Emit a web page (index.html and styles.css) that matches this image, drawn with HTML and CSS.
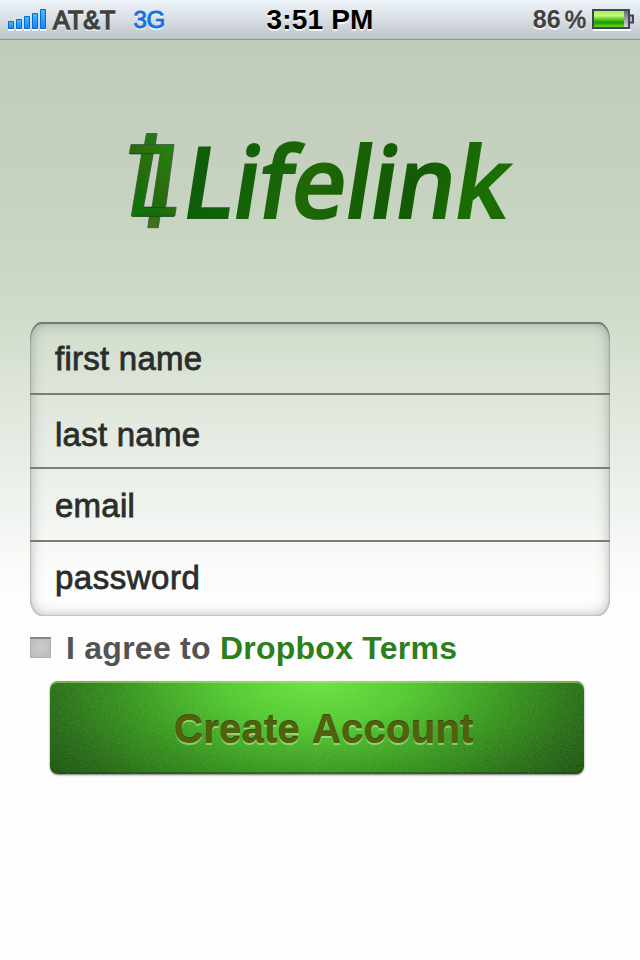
FILE: index.html
```html
<!DOCTYPE html>
<html lang="en">
<head>
<meta charset="utf-8">
<title>Lifelink</title>
<link rel="stylesheet" href="styles.css">
</head>
<body>
<header class="status">
  <div class="carrier">
    <svg class="signal" width="40" height="22" viewBox="0 0 40 22">
      <defs><linearGradient id="sig" x1="0" y1="0" x2="0" y2="1"><stop offset="0" stop-color="#45bdff"/><stop offset="1" stop-color="#1687f2"/></linearGradient></defs>
      <g fill="#fff"><path d="M0 20h6v2H0zM8 20h6v2H8zM16 20h6v2h-6zM24 20h6v2h-6zM32 20h6v2h-6z"/></g>
      <g fill="url(#sig)" stroke="#0868d8"><path d="M.5 12.5h5v7h-5z"/><path d="M8.500 10.500h5v9h-5z"/><path d="M16.500 7.500h5v12h-5z"/><path d="M24.500 4.500h5v15h-5z"/><path d="M32.500.5h5v19h-5z"/></g>
    </svg>
    <span class="operator">AT&amp;T</span>
    <span class="network">3G</span>
  </div>
  <span class="time">3:51 PM</span>
  <div class="power">
    <span class="percent">86<span class="sign">%</span></span>
    <svg class="battery" width="43" height="22" viewBox="0 0 43 22">
      <defs><linearGradient id="bat" x1="0" y1="0" x2="0" y2="1"><stop offset="0" stop-color="#a5f34b"/><stop offset=".3" stop-color="#c3f686"/><stop offset=".5" stop-color="#62cf20"/><stop offset=".72" stop-color="#249600"/><stop offset="1" stop-color="#63e01b"/></linearGradient>
      <linearGradient id="cell" x1="0" y1="0" x2="0" y2="1"><stop offset="0" stop-color="#666"/><stop offset="1" stop-color="#ddd"/></linearGradient></defs>
      <path d="M1 21h38" stroke="#fff" stroke-width="2"/>
      <path d="M1 1h36v18H1z" fill="url(#cell)" stroke="#3c465b" stroke-width="2"/>
      <path d="M2 2h30v16H2z" fill="url(#bat)"/>
      <path d="M38 6.500h3v7h-3" fill="#b4bac4" stroke="#3c465b" stroke-width="2"/>
    </svg>
  </div>
</header>
<main class="page">
  <h1 class="logo">
    <svg class="mark" width="52" height="98" viewBox="127 132 52 98">
      <defs><linearGradient id="mk" x1="0" y1="1" x2="1" y2="0"><stop offset="0" stop-color="#087808"/><stop offset=".3" stop-color="#176e0c"/><stop offset=".5" stop-color="#2b6c0c"/><stop offset="1" stop-color="#238412"/></linearGradient>
      <linearGradient id="post" x1="0" y1="0" x2="0" y2="1"><stop offset="0" stop-color="#24761a"/><stop offset="1" stop-color="#3a7315"/></linearGradient></defs>
      <g stroke="#38503a" stroke-width=".8">
        <path fill="url(#post)" d="M146.500 133.500H157L155.300 145H144.400zM149.400 216H160L158.300 227.700H147.800z"/>
        <path fill="url(#mk)" fill-rule="evenodd" d="M131 144.600H174L165.700 207.300H176.200L174.800 216H131.300L141.600 153.700H129.300zM153.300 153.700L143.500 207.300H152L160.200 153.700z"/>
      </g>
      <path d="M130 153.700H153M143 207.300H165M132 216.300H174" stroke="#184c15" stroke-width="1"/>
    </svg>
    <span class="wordmark">Lifelink</span>
  </h1>
  <form class="signup">
    <div class="fields">
      <div class="field first">first name</div>
      <div class="field last">last name</div>
      <div class="field email">email</div>
      <div class="field password">password</div>
    </div>
    <div class="terms"><span class="check"></span><span class="agree">I agree to <a class="link">Dropbox Terms</a></span></div>
    <div class="create">
      <svg class="grain" width="534" height="93"><filter id="noise"><feTurbulence type="fractalNoise" baseFrequency=".65" numOctaves="2" seed="4"/><feColorMatrix values="0 0 0 0 .65  0 0 0 0 1  0 0 0 0 .45  1.600 0 0 0 -.6"/></filter><rect width="534" height="93" filter="url(#noise)"/></svg>
      <span class="label">Create Account</span>
    </div>
  </form>
</main>
</body>
</html>
```
FILE: styles.css
```css
* { box-sizing: border-box; }
body {
  margin: 0;
  width: 640px;
  height: 960px;
  overflow: hidden;
  font-family: "Liberation Sans", Arial, sans-serif;
  background: linear-gradient(#c1cbb9 40px, #c7d4c1 220px, #d0dccb 320px, #dfe7dc 400px, #e9efe8 470px, #f0f4f0 515px, #fafaf8 560px, #fdfdfd 600px);
}
.status {
  display: grid;
  grid-template-columns: 1fr auto 1fr;
  height: 40px;
  background: linear-gradient(#edf4f9, #d8dee3 50%, #bcc4c8);
  border-bottom: 1px solid #8c9596;
  font-weight: bold;
  text-shadow: 0 2px 0 rgba(255,255,255,.75);
  line-height: 39px;
}
.carrier { display: flex; padding-left: 8px; }
.signal { margin-top: 9px; }
.operator { margin-left: 5px; font-size: 25px; font-weight: normal; -webkit-text-stroke: 1.3px #414141; letter-spacing: .1px; color: #414141; line-height: 40px; }
.network { margin-left: 18px; font-size: 24px; font-weight: normal; letter-spacing: -.3px; color: #1472e4; -webkit-text-stroke: .9px #1472e4; line-height: 40px; }
.time { font-size: 28px; letter-spacing: .2px; }
.power { display: flex; justify-content: flex-end; padding-right: 5px; }
.percent { font-size: 25px; color: #414141; }
.sign { margin-left: 4px; font-size: 24px; font-weight: normal; -webkit-text-stroke: .8px #414141; }
.battery { margin: 9px 0 0 6px; }

.page { display: flex; flex-direction: column; }
.logo { display: flex; margin: 92px 0 0 127px; height: 98px; }
.mark { flex: none; }
.wordmark {
  height: 98px;
  font: 600 99px/95px "Open Sans", sans-serif;
  letter-spacing: -.9px;
  padding-right: 10px;
  -webkit-text-stroke: 1.8px transparent;
  white-space: nowrap;
  color: transparent;
  background: linear-gradient(105deg, #0c5c0a, #126209 20%, #1f6905 38%, #165e05 55%, #125a05 68%, #196902 80%, #1b7002 90%, #176203);
  background-clip: text;
  -webkit-background-clip: text;
  transform: skewX(-9px) skewX(-9deg) scaleX(.95);
  transform: skewX(-9deg) scaleX(.95);
  transform-origin: 0 86px;
}
.signup { margin: 92px 30px 0; }
.fields {
  height: 294px;
  border-radius: 12px / 18px;
  box-shadow: inset 0 2px 1px #72776d, inset 0 0 2px rgba(70,70,60,.6), inset 0 0 13px rgba(65,65,60,.38);
}
.field {
  padding-left: 25px;
  font-size: 33px;
  letter-spacing: .25px;
  color: #2b2d2b;
  -webkit-text-stroke: .8px #2b2d2b;
  border-bottom: 2px solid #7c7d75;
}
.first { height: 73px; line-height: 73px; }
.last { height: 74px; line-height: 79px; }
.email { height: 73px; line-height: 73px; }
.password { height: 74px; line-height: 71px; letter-spacing: .5px; border: 0; }
.terms { display: flex; height: 65px; }
.check {
  width: 21px;
  height: 21px;
  margin-top: 21px;
  background: radial-gradient(#cecdcc, #b9b8b7);
  box-shadow: inset 0 2px #8b8988, inset 0 0 0 1px #b0afaf;
}
.agree { margin-left: 15px; font-size: 32px; letter-spacing: .25px; line-height: 65px; font-weight: bold; color: #535353; white-space: nowrap; }
.link { color: #2e7f1c; }
.create {
  position: relative;
  width: 534px;
  height: 93px;
  margin-left: 20px;
  border-radius: 8px;
  overflow: hidden;
  background: radial-gradient(ellipse 330px 160px at 50% 0, #6be344, #54c933 28%, #37921f 60%, #296c19 82%, #1b4c10 105%);
  box-shadow: inset 0 2px rgba(190,230,120,.5), inset 0 -2px rgba(20,65,10,.5), 0 1px 2px #777;
}
.grain { position: absolute; left: 0; top: 0; opacity: .16; }
.label {
  position: relative;
  display: block;
  padding-left: 124px;
  font-size: 40px;
  line-height: 97px;
  font-weight: bold;
  letter-spacing: .25px;
  word-spacing: 2px;
  white-space: nowrap;
  color: #51610e;
  text-shadow: 0 -1px #3d490b, 0 2px rgba(180,235,150,.65);
}
```
